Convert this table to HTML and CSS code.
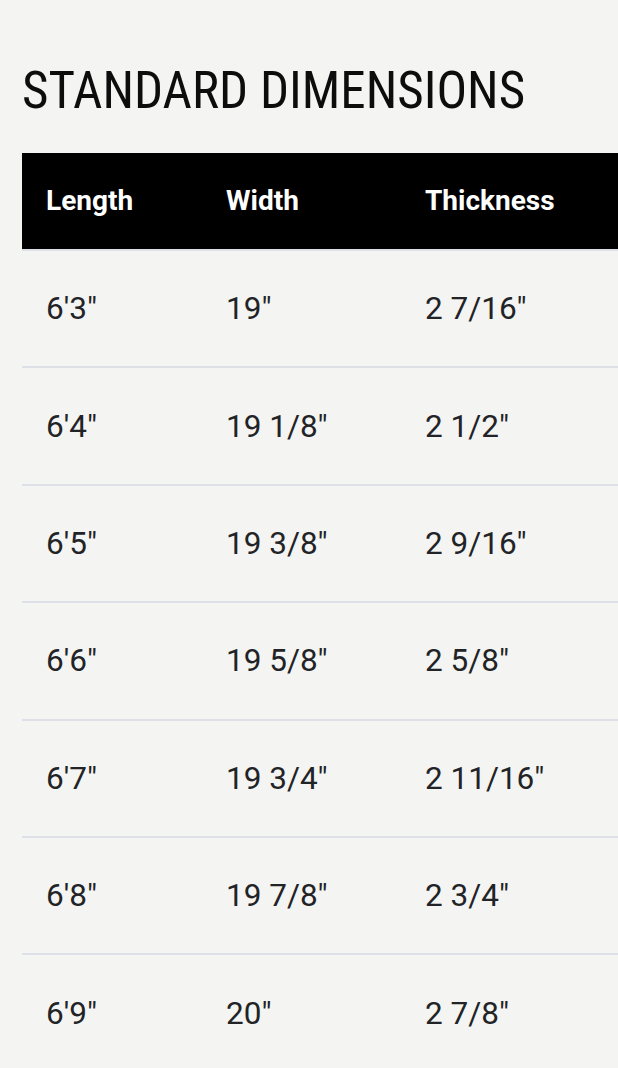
FILE: index.html
```html
<!DOCTYPE html>
<html lang="en">
<head>
<meta charset="utf-8">
<title>Standard Dimensions</title>
<link rel="stylesheet" href="styles.css">
</head>
<body>
<section class="dims">
  <h1 class="dims-title">STANDARD DIMENSIONS</h1>
  <table class="dims-table">
    <thead>
      <tr><th class="c1">Length</th><th class="c2">Width</th><th class="c3">Thickness</th></tr>
    </thead>
    <tbody>
      <tr><td>6'3"</td><td>19"</td><td>2 7/16"</td></tr>
      <tr><td>6'4"</td><td>19 1/8"</td><td>2 1/2"</td></tr>
      <tr><td>6'5"</td><td>19 3/8"</td><td>2 9/16"</td></tr>
      <tr><td>6'6"</td><td>19 5/8"</td><td>2 5/8"</td></tr>
      <tr><td>6'7"</td><td>19 3/4"</td><td>2 11/16"</td></tr>
      <tr><td>6'8"</td><td>19 7/8"</td><td>2 3/4"</td></tr>
      <tr><td>6'9"</td><td>20"</td><td>2 7/8"</td></tr>
    </tbody>
  </table>
</section>
</body>
</html>
```

FILE: styles.css
```css
html, body {
  margin: 0;
  padding: 0;
  background: #f4f4f2;
  overflow: hidden;
}
.dims {
  padding: 61px 0 0 22px;
  width: 760px;
}
.dims-title {
  margin: 0 0 32px 0;
  font-family: Roboto, "Liberation Sans", sans-serif;
  font-stretch: condensed;
  font-weight: 400;
  font-size: 51px;
  line-height: 60px;
  color: #0d0d0d;
  letter-spacing: 0;
}
.dims-table {
  border-collapse: collapse;
  width: 740px;
  table-layout: fixed;
  font-family: Roboto, "Liberation Sans", sans-serif;
}
.dims-table th {
  background: #000;
  color: #fff;
  font-weight: 700;
  font-size: 28px;
  line-height: 32px;
  text-align: left;
  padding: 31.8px 0 32.2px 24px;
  height: 32px;
}
.dims-table th.c1 { width: 156px; }
.dims-table th.c2 { width: 175px; }
.dims-table td {
  border-top: 2px solid #dde0e6;
  color: #222326;
  font-weight: 400;
  font-size: 31.5px;
  line-height: 36px;
  padding: 40.3px 0 39.1px 24px;
  text-align: left;
}
```
